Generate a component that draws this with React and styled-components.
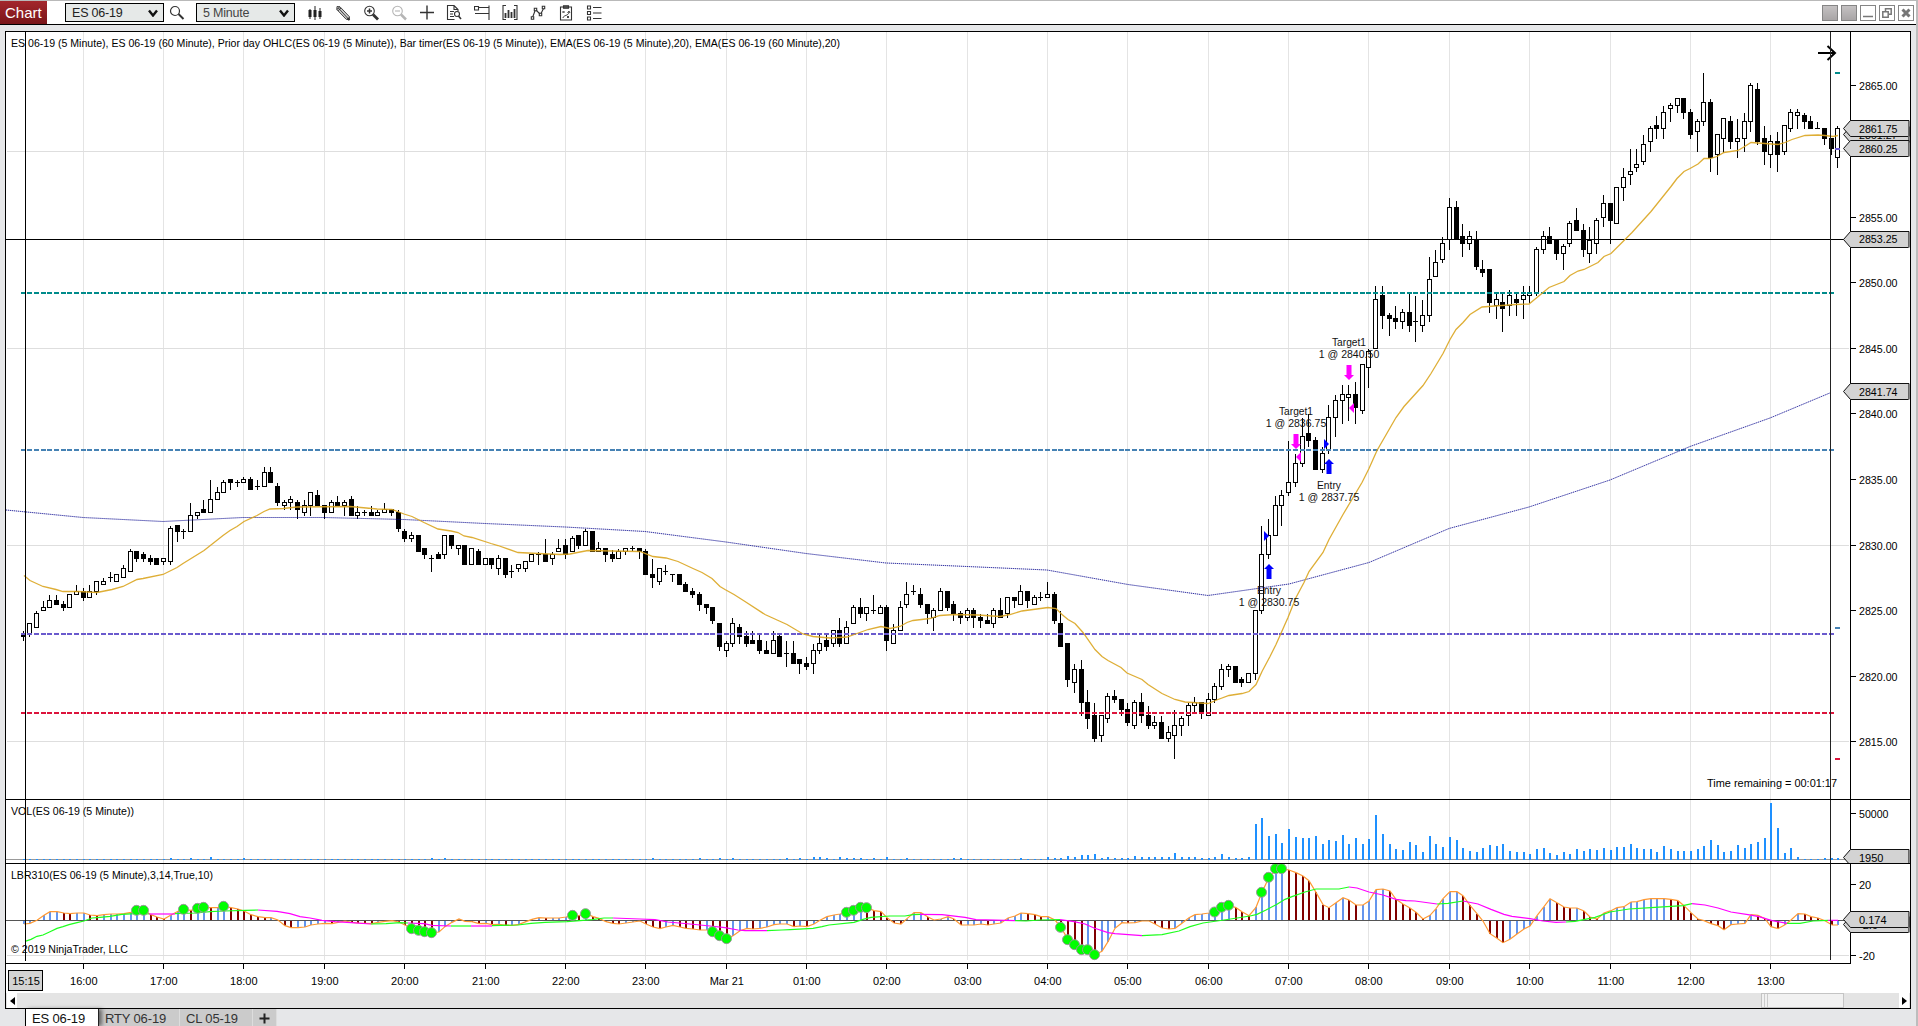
import React from "react";
import styled, { createGlobalStyle } from "styled-components";

const BAR_STEP = 6.6965;
const barX = (i) => Math.floor(23 + i * BAR_STEP);
const priceY = (price) => Math.round(85.4 + (2865 - price) * 13.12);
const lbrY = (v) => 790 + v / 3;

// high, body top, body bottom, low in pixels, then x = filled, o = hollow
const candles = `
631 635 637 641 x,623 623 634 637 o,611 613 628 628 o,601 607 611 611 o,595 600 608 608 o,595 600 605 605 x,
601 604 608 611 x,594 594 608 608 o,585 591 595 595 o,588 591 598 601 x,585 591 598 598 o,581 581 592 595 o,
578 581 585 585 o,572 577 578 582 x,574 574 582 582 o,565 568 578 578 o,549 551 572 572 o,551 551 559 562 x,
552 554 559 562 x,555 558 562 565 x,558 558 565 565 x,558 558 562 565 o,526 528 562 565 o,525 525 532 542 x,
529 531 532 539 x,503 515 532 532 o,512 512 516 519 o,500 509 513 513 x,480 499 513 513 o,487 492 500 500 o,
480 482 493 493 o,479 479 483 490 x,480 482 483 487 x,477 479 483 483 o,477 479 490 490 x,480 486 487 490 x,
467 472 487 487 o,467 472 483 483 x,483 486 503 506 x,500 502 506 510 o,496 499 503 510 o,500 502 510 519 x,
500 505 513 516 o,492 492 506 516 o,490 495 506 506 x,505 505 513 519 x,500 502 513 513 o,496 502 506 506 x,
500 502 506 516 o,496 499 516 516 x,506 512 516 519 o,510 512 513 516 x,506 512 516 516 x,510 512 516 516 o,
503 509 513 513 o,509 509 513 516 x,510 512 529 532 x,529 531 539 542 x,532 535 539 542 o,535 535 552 552 x,
548 548 555 559 x,555 558 559 572 x,552 554 559 559 x,535 535 555 559 o,535 535 546 549 x,545 545 549 555 o,
545 545 565 565 x,548 548 565 565 o,549 551 565 565 x,558 558 565 565 o,558 558 565 569 x,555 558 569 575 o,
558 558 575 578 x,565 571 572 578 x,564 564 569 572 o,561 561 569 572 o,554 554 562 562 o,552 554 555 565 x,
539 554 562 562 x,552 554 559 565 o,539 548 552 552 o,539 545 555 559 x,536 538 552 552 o,535 535 546 549 x,
529 531 546 546 o,531 531 552 552 x,542 548 552 552 o,548 548 555 562 x,550 554 559 562 x,549 551 559 559 o,
548 548 552 555 o,546 548 549 551 x,548 548 552 559 x,549 551 575 575 x,559 574 578 588 x,568 568 582 585 o,
565 571 572 575 x,574 574 575 582 x,574 574 585 585 x,582 584 592 592 x,588 591 595 598 x,592 594 605 611 x,
604 604 608 614 x,607 607 621 624 x,623 623 647 651 x,641 643 651 657 o,618 623 644 647 o,624 627 637 644 x,
631 636 644 647 x,631 640 644 644 x,634 640 651 654 x,641 650 654 654 x,631 640 654 654 o,634 636 657 657 x,
641 653 654 667 x,641 653 664 664 x,659 659 664 674 x,657 663 667 670 x,644 650 664 674 o,635 643 651 654 o,
635 640 647 651 x,630 630 644 647 o,618 630 644 647 x,621 627 644 644 o,605 607 624 624 o,598 607 614 618 x,
607 607 614 621 o,595 610 611 614 x,605 607 614 614 o,605 607 641 651 x,624 630 644 644 o,601 607 631 631 o,
582 594 605 608 o,585 591 592 595 x,588 594 605 608 x,604 604 614 624 x,608 610 618 631 o,588 591 611 611 o,
591 591 608 611 x,601 604 614 621 x,611 613 618 624 x,608 610 618 621 o,608 610 618 628 x,614 617 621 628 x,
614 620 624 624 x,608 610 624 628 o,598 610 618 618 x,597 597 614 618 o,597 597 601 608 x,585 591 605 605 o,
591 591 601 608 x,595 597 605 605 o,592 597 598 601 x,582 594 598 598 o,592 594 621 624 x,611 623 647 647 x,
643 643 680 687 x,664 669 683 693 o,660 669 703 716 x,690 702 719 729 x,703 715 739 742 x,715 715 736 742 o,
693 696 719 723 o,690 696 700 703 x,699 699 710 716 x,703 709 723 726 x,700 702 726 729 o,693 702 716 723 x,
706 715 726 729 x,716 722 726 729 o,716 722 739 739 x,726 732 739 742 o,710 725 736 759 o,716 718 726 736 o,
703 705 716 726 o,697 702 706 712 o,702 702 714 719 x,693 699 716 716 o,683 686 700 703 o,664 669 687 690 o,
664 666 670 677 o,666 666 683 683 x,677 679 683 687 x,673 673 683 683 o,610 610 674 680 o,526 554 611 614 o,
519 535 555 559 o,496 505 536 536 o,490 495 506 526 o,441 482 493 496 o,454 463 483 487 o,418 436 464 467 o,
414 433 441 447 x,437 440 470 470 x,447 453 470 473 o,405 417 450 454 o,395 400 418 437 o,385 394 401 424 o,
385 394 398 421 o,382 394 408 424 x,364 364 411 414 o,349 351 368 388 o,286 299 349 349 o,286 295 316 329 x,
313 315 319 336 x,306 318 322 329 x,309 312 322 329 o,293 312 326 332 x,296 321 322 342 x,300 315 326 332 o,
257 279 316 322 o,250 262 277 277 o,237 243 260 263 o,198 207 240 250 o,201 207 240 240 x,224 236 244 257 x,
231 236 244 250 o,231 240 267 270 x,260 269 273 277 x,269 269 303 313 x,293 299 306 319 o,293 302 309 332 x,
290 295 306 316 o,294 299 303 316 x,286 295 300 319 o,286 293 296 303 o,247 249 294 296 o,231 236 250 254 o,
227 236 244 244 x,240 240 254 260 x,244 246 254 270 o,221 223 244 247 o,208 220 231 231 x,224 230 250 257 x,
227 240 254 263 o,218 220 244 254 o,195 203 218 227 o,203 203 221 244 x,187 187 224 224 o,168 177 188 201 o,
149 171 175 185 o,149 164 168 172 o,135 144 162 165 o,126 128 142 152 o,116 125 129 139 x,106 112 129 139 o,
103 105 109 122 o,98 98 106 113 o,98 98 113 119 x,109 112 135 139 x,119 121 132 152 o,73 102 122 126 o,
99 102 158 172 x,134 134 155 175 o,118 118 139 153 o,116 121 142 149 x,119 138 142 158 o,113 121 139 152 o,
83 85 122 132 o,83 89 142 145 x,126 138 152 165 x,135 141 155 168 o,132 141 155 172 x,125 125 152 155 o,
109 112 129 132 o,109 112 116 129 o,113 115 122 129 x,116 121 129 129 x,122 128 129 129 x,128 128 139 145 x,
138 138 149 155 x,126 128 158 168 o`
  .trim()
  .split(",")
  .map((row) => {
    const [high, top, bottom, low, kind] = row.trim().split(" ");
    return { high: +high, top: +top, bottom: +bottom, low: +low, filled: kind === "x" };
  });

const ema5 =
  "24,575 30,580 43,586 56,589 63,591 78,591 97,592 112,589 123,586 137,579 143,578 163,574 177,567 183,563 204,550 223,535 230,530 237,526 244,521 257,515 264,511 270,508.5 283,508 297,506.5 350,506 377,508.5 392,509 404,513.5 412,516 424,522 438,528.5 451,530.5 458,532 464,535.5 472,537 491,543 498,545 518,552 538,553 560,554 570,553.5 580,551.5 588,550 612,550.5 640,551 653,556 666,557.5 678,561 693,568 702,572 712,578 720,586 725,589 734,594 745,601 765,614 787,624 803,633.5 813,636 830,637.5 847,636.5 857,633 868,629 881,626 890,628 900,626 907,622 913,620 930,618 940,615 955,614 978,614.5 1000,616 1010,614 1022,610.5 1048,607 1056,608 1062,614 1068,619 1075,623 1083,632 1095,649 1102,656 1108,660 1121,667 1127,672.5 1142,679 1148,684 1162,693 1175,699 1185,701.5 1200,702.5 1208,703 1218,699 1229,695 1242,693 1249,691 1256,684 1262,671 1270,656 1276,644 1288,617 1296,597 1304,582 1309,571 1323,552 1329,539 1343,514 1362,482 1369,468 1377,450 1396,417 1404,406 1423,385 1431,373 1443,353 1450,339 1456,329 1463,322 1470,314 1482,306.5 1495,305.5 1515,304 1529,303.5 1537,297 1549,287 1564,281 1570,275 1578,270.5 1584,269 1598,262 1604,256 1611,253 1621,243 1632,232 1651,211 1671,186 1677,178 1684,171 1690,168 1698,163.5 1704,158 1710,158 1717,156 1724,152 1738,150 1743,147 1751,142 1765,143 1778,144 1785,142 1792,139 1805,135 1818,134.5 1825,135 1833,136 1838,135";
const ema60 =
  "6,509.5 83,517 163,521 243,517 324,517 404,519 485,523 565,526.5 645,531 726,541.5 806,553 886,562.5 967,566 1047,569.5 1128,584 1208,595 1289,583.5 1369,562 1449,528 1529,506.5 1610,479.5 1690,446 1770,417.5 1831,392";

const levels = [
  { y: 292, last: 72, color: "#008b8b" },
  { y: 449, last: 627, color: "#4682b4" },
  { y: 633, last: 148, color: "#6a5acd" },
  { y: 712, last: 758, color: "#dc143c" },
];

// overnight bars taller than one pixel
const smallVolume = {
  22: 2, 25: 2, 28: 3, 33: 2, 61: 2, 63: 2, 94: 2, 101: 2, 104: 2, 106: 2, 114: 2, 116: 2, 118: 3, 119: 3,
  120: 2, 122: 3, 123: 2, 124: 2, 125: 2, 127: 2, 129: 3, 132: 2, 139: 2, 140: 2, 149: 2, 153: 3, 154: 2,
  155: 2, 156: 4, 157: 3, 158: 5, 159: 5, 160: 6, 161: 2, 162: 3, 163: 2, 164: 2, 165: 2, 166: 4, 167: 3,
  168: 3, 169: 3, 170: 3, 171: 3, 172: 7, 173: 3, 174: 3, 175: 3, 176: 2, 177: 2, 178: 3, 179: 6, 180: 3,
  181: 2, 182: 2, 183: 3,
};
const dayVolume = [
  36, 42, 24, 26, 17, 31, 23, 22, 22, 24, 16, 20, 19, 25, 16, 22, 16, 21, 45, 26, 16, 11, 10, 18, 15, 8, 24,
  16, 13, 23, 20, 12, 9, 8, 12, 15, 14, 16, 9, 8, 8, 6, 11, 12, 7, 5, 8, 6, 11, 9, 11, 10, 12, 10, 13, 13, 16,
  12, 11, 11, 8, 14, 11, 9, 9, 9, 11, 14, 20, 15, 8, 9, 15, 12, 16, 18, 22, 57, 32, 7, 12, 3, 1, 1, 1, 2, 2, 2,
];
const volume = candles.map((_, i) => (i < 184 ? smallVolume[i] || 1 : dayVolume[i - 184] || 1));

const lbr = [
  402, 400, 391, 376, 365, 365, 369, 371, 369, 369, 375, 377, 374, 372, 372, 371, 367, 361, 361, 374, 381, 387,
  375, 364, 358, 361, 355, 352, 353, 353, 349, 353, 357, 363, 374, 380, 383, 383, 390, 407, 413, 413, 411, 405,
  402, 400, 401, 397, 393, 397, 399, 400, 401, 397, 394, 392, 396, 405, 416, 421, 425, 428, 426, 410, 397, 387,
  394, 395, 401, 400, 404, 403, 406, 406, 403, 395, 388, 383, 384, 384, 384, 381, 376, 377, 371, 380, 385, 395,
  400, 402, 399, 396, 393, 402, 411, 416, 411, 406, 411, 415, 417, 420, 420, 425, 437, 446, 437, 422, 415, 417,
  415, 411, 404, 402, 402, 410, 408, 410, 402, 391, 380, 375, 372, 367, 361, 352, 353, 362, 365, 383, 399, 402,
  386, 368, 368, 381, 390, 387, 380, 387, 405, 405, 405, 402, 405, 402, 399, 384, 378, 369, 371, 374, 380, 380,
  390, 412, 449, 464, 479, 479, 494, 484, 455, 415, 398, 399, 398, 393, 393, 402, 414, 417, 415, 400, 383, 374,
  372, 369, 366, 352, 346, 353, 365, 377, 352, 307, 262, 236, 236, 240, 248, 258, 272, 307, 344, 353, 338, 323,
  330, 345, 345, 333, 299, 297, 303, 328, 342, 354, 367, 387, 376, 356, 326, 305, 305, 317, 346, 371, 393, 431,
  445, 458, 448, 432, 417, 408, 377, 350, 326, 338, 351, 354, 354, 363, 381, 387, 369, 362, 353, 350, 336, 335,
  329, 326, 326, 326, 328, 332, 347, 368, 387, 392, 401, 407, 419, 404, 402, 400, 374, 376, 386, 410, 416, 404,
  390, 371, 372, 380, 384, 392, 405, 405,
];
const lbrDots = [
  17, 18, 24, 26, 27, 30, 58, 59, 60, 61, 82, 84, 103, 104, 105, 123, 124, 125, 126, 155, 156, 157, 158, 159,
  160, 178, 179, 180, 185, 186, 187, 188,
];
const slowLine = [
  ["up", [25,454, 31,448, 37,439, 43,435, 50,425, 57,415, 63,410, 69,404, 77,398, 84,393, 92,384, 100,382, 110,379, 122,373, 139,370, 149,372]],
  ["down", [149,372, 175,372]],
  ["up", [175,371, 196,369, 210,365, 224,363, 245,361, 258,360]],
  ["down", [258,360, 277,364, 290,371, 300,380, 310,384, 322,391, 335,395, 351,398, 371,402]],
  ["up", [371,402, 386,401, 400,398, 408,399]],
  ["down", [408,399, 424,401, 432,406, 451,408]],
  ["up", [451,408, 471,408]],
  ["down", [471,408, 492,408]],
  ["up", [492,407, 518,405, 531,400, 545,397, 567,395, 580,392, 592,389, 604,384, 613,384]],
  ["down", [613,384, 640,387, 655,389, 668,396, 690,402, 710,408, 725,413, 738,420, 745,422, 767,422]],
  ["up", [767,422, 782,420, 790,419, 813,415, 822,410, 829,405, 854,397, 863,388, 871,382, 890,378, 905,378, 913,374, 920,373]],
  ["down", [920,373, 942,374, 965,382, 976,389, 1015,392]],
  ["up", [1015,392, 1026,393, 1040,390, 1060,389]],
  ["down", [1060,389, 1074,395, 1085,402, 1094,414, 1108,428, 1115,431, 1142,437]],
  ["up", [1142,437, 1162,434, 1179,423, 1190,410, 1203,399, 1224,390, 1250,378, 1257,373, 1266,360, 1277,343, 1285,328, 1292,320, 1305,306, 1316,297, 1339,297, 1349,291]],
  ["down", [1349,291, 1357,294, 1369,306, 1383,315, 1396,328, 1406,332, 1415,333, 1437,342]],
  ["up", [1437,342, 1448,340, 1463,333]],
  ["down", [1463,333, 1478,342, 1491,358, 1504,373, 1512,379, 1530,386, 1543,393, 1556,397, 1566,396]],
  ["up", [1566,396, 1575,394, 1595,382, 1610,366, 1629,357, 1651,353, 1683,347, 1692,341]],
  ["down", [1692,341, 1705,345, 1718,354, 1731,366, 1748,374, 1759,380, 1772,392, 1787,400]],
  ["up", [1787,400, 1800,400, 1813,393, 1828,391]],
  ["down", [1828,391, 1838,391]],
];
const toPoints = (list) => {
  const out = [];
  for (let i = 0; i < list.length; i += 2) out.push(`${list[i]},${lbrY(list[i + 1])}`);
  return out.join(" ");
};

const hours = [
  "16:00", "17:00", "18:00", "19:00", "20:00", "21:00", "22:00", "23:00", "Mar 21", "01:00", "02:00", "03:00",
  "04:00", "05:00", "06:00", "07:00", "08:00", "09:00", "10:00", "11:00", "12:00", "13:00",
].map((label, n) => ({ label, x: barX(9 + n * 12) }));

const trades = [
  { side: "sell", x: 1349, name: "Target1", text: "1 @ 2840.50", textY: 346, arrowY: 365, markY: 408 },
  { side: "sell", x: 1296, name: "Target1", text: "1 @ 2836.75", textY: 415, arrowY: 434, markY: 457 },
  { side: "buy", x: 1329, name: "Entry", text: "1 @ 2837.75", textY: 489, arrowY: 459, markY: 444 },
  { side: "buy", x: 1269, name: "Entry", text: "1 @ 2830.75", textY: 594, arrowY: 564, markY: 536 },
];

const Panel = ({ top, height, children }) => (
  <Plot viewBox={`6 ${top} 1904 ${height}`} height={height}>
    <g shapeRendering="crispEdges">
      {hours.map((h) => (
        <rect key={h.label} x={h.x} y={top} width="1" height={Math.min(height, 960 - top)} fill="#e4e4e4" />
      ))}
    </g>
    {children}
  </Plot>
);

const Cursor = ({ top, height }) => (
  <g shapeRendering="crispEdges">
    <rect x="25" y={top} width="1" height={Math.min(height, 961 - top)} fill="#000" />
    <rect x="1830" y={top} width="1" height={Math.min(height, 960 - top)} fill="#222" />
    <rect x="1850" y={top} width="1" height={height} fill="#000" />
  </g>
);

const PriceText = ({ y, children }) => (
  <text x="1859" y={y} textLength="38.5" lengthAdjust="spacingAndGlyphs">{children}</text>
);

const Tag = ({ y, baseline = 13, wide, children }) => (
  <g>
    <path d={`M1843.5 ${y + 8.5}L1850.5 ${y + 0.5}H1909V${y + 16.5}H1850.5Z`} fill="#d3d3d3" stroke="#111" />
    <rect x="1908" y={y + 1} width="1" height="16" fill="#666" />
    {wide ? <PriceText y={y + baseline}>{children}</PriceText> : <text x="1859" y={y + baseline}>{children}</text>}
  </g>
);

const PricePanel = () => (
  <Panel top={32} height={767}>
    <g shapeRendering="crispEdges">
      {[2860, 2845, 2830, 2815].map((p) => (
        <rect key={p} x="7" y={priceY(p)} width="1842" height="1" fill="#dedede" />
      ))}
      {candles.map((c, i) => (
        <g key={i}>
          <rect x={barX(i)} y={c.high} width="1" height={c.low - c.high} />
          <rect x={barX(i) - 2} y={c.top} width="5" height={c.bottom - c.top} />
          {!c.filled && <rect x={barX(i) - 1} y={c.top + 1} width="3" height={c.bottom - c.top - 2} fill="#fff" />}
        </g>
      ))}
      <rect x="6" y="239" width="1838" height="1" />
      {levels.map((l) =>
        candles.map((_, i) => (
          <rect key={l.y + "-" + i} x={barX(i) - 2} y={i === 271 ? l.last : l.y} width="5" height="2" fill={l.color} />
        ))
      )}
    </g>
    <polyline points={ema60} fill="none" stroke="#00008b" strokeWidth="1" opacity="0.22" transform="translate(0 .5)" />
    <polyline
      points={ema60}
      fill="none"
      stroke="#00008b"
      strokeWidth="1"
      strokeDasharray="1 1"
      opacity="0.75"
      transform="translate(0 .5)"
    />
    <polyline points={ema5} fill="none" stroke="#daa520" strokeWidth="1.3" opacity="0.9" transform="translate(0 .5)" />
    {trades.map((t) => {
      const sell = t.side === "sell";
      const dir = sell ? 1 : -1;
      const tip = sell ? t.arrowY + 15 : t.arrowY;
      const tail = sell ? t.arrowY : t.arrowY + 15;
      const base = t.x + (sell ? 5 : -5);
      return (
        <g key={t.text} fill={sell ? "#f0f" : "#00f"}>
          <path
            d={`M${t.x - 2.5} ${tail}h5V${tip - dir * 5}h2.5L${t.x} ${tip}L${t.x - 5} ${tip - dir * 5}h2.5Z`}
          />
          <path d={`M${t.x} ${t.markY}L${base} ${t.markY - 5}V${t.markY + 5}Z`} />
          <g fill="#111" textAnchor="middle">
            <text x={t.x} y={t.textY} textLength={sell ? 34 : 24} lengthAdjust="spacingAndGlyphs">{t.name}</text>
            <text x={t.x} y={t.textY + 12} textLength="60.5" lengthAdjust="spacingAndGlyphs">{t.text}</text>
          </g>
        </g>
      );
    })}
    <text x="11" y="47" textLength="829" lengthAdjust="spacingAndGlyphs">
      ES 06-19 (5 Minute), ES 06-19 (60 Minute), Prior day OHLC(ES 06-19 (5 Minute)), Bar timer(ES 06-19 (5 Minute)), EMA(ES 06-19 (5 Minute),20), EMA(ES 06-19 (60 Minute),20)
    </text>
    <text x="1707" y="787" textLength="130" lengthAdjust="spacingAndGlyphs">Time remaining = 00:01:17</text>
    <path d="M1818 53H1835M1827.5 46L1835 53L1827.5 60" fill="none" stroke="#000" strokeWidth="2" />
    <Cursor top={32} height={767} />
    {[2865, 2855, 2850, 2845, 2840, 2835, 2830, 2825, 2820, 2815].map((p) => (
      <g key={p}>
        <rect x="1851" y={priceY(p)} width="5" height="1" />
        <PriceText y={priceY(p) + 5}>{p}.00</PriceText>
      </g>
    ))}
    <Tag wide y={126}>2861.27</Tag>
    <Tag wide y={140}>2860.25</Tag>
    <Tag wide y={120}>2861.75</Tag>
    <Tag wide y={231} baseline={12}>2853.25</Tag>
    <Tag wide y={383}>2841.74</Tag>
  </Panel>
);

const VolumePanel = () => (
  <Panel top={800} height={63}>
    <g shapeRendering="crispEdges">
      <rect x="6" y="859" width="1840" height="1" fill="#999" />
      {volume.map((v, i) => (
        <rect key={i} x={barX(i)} y={860 - v} width="2" height={v} fill="#1e90ff" />
      ))}
      <rect x="1851" y="813" width="5" height="1" />
    </g>
    <text x="11" y="815" textLength="123" lengthAdjust="spacingAndGlyphs">VOL(ES 06-19 (5 Minute))</text>
    <Cursor top={800} height={63} />
    <text x="1859" y="818" textLength="29.5" lengthAdjust="spacingAndGlyphs">50000</text>
    <Tag y={849}>1950</Tag>
  </Panel>
);

const LbrPanel = () => (
  <Panel top={864} height={100}>
    <g shapeRendering="crispEdges">
      <rect x="7" y="955" width="1842" height="1" fill="#dedede" />
      {lbr.map((v, i) => {
        const y = Math.round(lbrY(v));
        const rising = i === 0 || v <= lbr[i - 1];
        return (
          <rect
            key={i}
            x={barX(i)}
            y={Math.min(y, 920)}
            width="2"
            height={Math.abs(920 - y)}
            fill={rising ? "#6495ed" : "#800000"}
          />
        );
      })}
      <rect x="6" y="920" width="1840" height="1" fill="#555" />
    </g>
    <polyline
      points={lbr.map((v, i) => `${barX(i) + 1},${lbrY(v)}`).join(" ")}
      fill="none"
      stroke="#ff9933"
      strokeWidth="1.2"
    />
    {slowLine.map(([dir, list], i) => (
      <polyline key={i} points={toPoints(list)} fill="none" stroke={dir === "up" ? "#1eff1e" : "#f0f"} strokeWidth="1.2" />
    ))}
    {lbrDots.map((i) => (
      <circle key={i} cx={barX(i) + 0.5} cy={lbrY(lbr[i])} r="5" fill="#0f0" stroke="#999" />
    ))}
    <text x="11" y="879" textLength="202" lengthAdjust="spacingAndGlyphs">LBR310(ES 06-19 (5 Minute),3,14,True,10)</text>
    <text x="11" y="953" textLength="117" lengthAdjust="spacingAndGlyphs">© 2019 NinjaTrader, LLC</text>
    <Cursor top={864} height={100} />
    <g shapeRendering="crispEdges">
      <rect x="6" y="963" width="1845" height="1" />
      <rect x="1851" y="884" width="5" height="1" />
      <rect x="1851" y="955" width="5" height="1" />
    </g>
    <text x="1859" y="889">20</text>
    <text x="1859" y="960">-20</text>
    <Tag y={916}>-2.6</Tag>
    <Tag y={911}>0.174</Tag>
  </Panel>
);

const TimeAxis = () => (
  <Plot viewBox="6 964 1904 29" height="29">
    {hours.map((h) => (
      <g key={h.label}>
        <rect x={h.x} y="964" width="1" height="5" />
        <text x={h.x + 0.8} y="985" textAnchor="middle">{h.label}</text>
      </g>
    ))}
    <rect x="8.5" y="970.5" width="34" height="20" fill="#d3d3d3" stroke="#000" />
    <text x="26" y="985" textAnchor="middle">15:15</text>
  </Plot>
);

const toolIcons = [
  // candlesticks
  <g fill="#222" stroke="none">
    <path d="M1.500 5h3v7h-3zM6.500 5h3v7h-3zM11.500 6h3v6h-3z" />
    <path d="M2.500 4h1v10h-1zM7.500 1h1v14h-1zM12.500 3h1v11h-1z" />
  </g>,
  // pencil
  <g strokeWidth=".9">
    <path d="M2 1.500l3 .3 9.500 10-.3 3-3-.5L1.800 4.500z" fill="#ccc" />
    <path d="M3.400 3l9.500 10.500M1.800 4.500l3-2.700M3 5.800l3-2.700" />
    <path d="M12.500 13l2 2" strokeWidth="1.800" />
  </g>,
  <g>
    <circle cx="6.500" cy="6" r="4.800" />
    <path d="M6.500 3.500v5M4 6h5" strokeWidth="1.500" />
    <path d="M10 9.500l5 5" strokeWidth="2.800" />
  </g>,
  <g stroke="#b5b5b5">
    <circle cx="6.500" cy="6" r="4.800" />
    <path d="M4 6h5" />
    <path d="M10 9.500l5 5" strokeWidth="2.500" />
  </g>,
  <path d="M8 .5v14M1 7.500h14" strokeWidth="1.400" />,
  // data box
  <g>
    <path d="M8.500 14.500h-7v-14h6.500l4 4v2M8 .5v4h4M4 6.500h4M4 9h3M4 11.500h4" />
    <circle cx="11" cy="9" r="2.500" fill="#fff" />
    <path d="M12.500 11l2.500 3" strokeWidth="1.600" />
  </g>,
  // chart trader
  <path d="M15 .5v14.500M.5 1.500h4v3.500h-4zM4.500 2.500h10.500M1 8.500h14" />,
  // data series
  <g>
    <path d="M4 .5h-3v14h3M12 .5h3v14h-3" />
    <path d="M3.500 8v5M6.500 5v8M9.500 7v6M12.500 4v9" strokeWidth="1.800" />
  </g>,
  // indicators
  <g>
    <path d="M2.500 12.500l3-8 5 5 3.500-7" />
    <path d="M1.300 11.800h2.400v2.400h-2.400zM4.300 3.300h2.400v2.400h-2.400zM9.300 8.300h2.400v2.400h-2.400zM12.300 1.300h2.400v2.400h-2.400z" fill="#fff" />
  </g>,
  // strategies
  <g>
    <path d="M2.500 2h11v13h-11z" />
    <path d="M5.500 .8h5v2.500h-5z" fill="#555" />
    <path d="M4.500 6l2 2m0-2l-2 2M9 11l2 2m0-2l-2 2M5 13c0-3 6-2 6-6M9.500 8l1.500-2L12 8" strokeWidth=".9" />
  </g>,
  // properties
  <path d="M1.500 1h3v3h-3zM1.500 6.500h3v3h-3zM1.500 12h3v3h-3zM7 2.500h8.500M7 8h8.500M7 13.500h8.500" />,
];

const App = () => (
  <Window>
    <GlobalStyle />
    <Toolbar>
      <ChartButton>Chart</ChartButton>
      <Select>
        ES 06-19
        <Chevron viewBox="0 0 10 8"><path d="M1 1.500L5 6.500L9 1.500" /></Chevron>
      </Select>
      <SearchIcon viewBox="0 0 16 16">
        <circle cx="6" cy="6" r="4.500" />
        <path d="M9.500 9l5 5" strokeWidth="2" />
      </SearchIcon>
      <Select $muted>
        5 Minute
        <Chevron viewBox="0 0 10 8"><path d="M1 1.500L5 6.500L9 1.500" /></Chevron>
      </Select>
      <Tools>
        {toolIcons.map((icon, i) => (
          <ToolIcon key={i} viewBox="0 0 16 16">{icon}</ToolIcon>
        ))}
      </Tools>
      <Controls>
        <Control $filled />
        <Control $filled />
        <Control><svg viewBox="0 0 14 14"><path d="M2 10.500h10" /></svg></Control>
        <Control><svg viewBox="0 0 14 14"><path d="M5.500 5V2.800h5.700v5.400H9M2.800 5.800h5.400v5.400H2.800z" /></svg></Control>
        <Control><svg viewBox="0 0 14 14"><path d="M3.500 3.500l7 7M10.500 3.500l-7 7" strokeWidth="3" /></svg></Control>
      </Controls>
    </Toolbar>
    <Frame>
      <PricePanel />
      <Divider />
      <VolumePanel />
      <Divider />
      <LbrPanel />
      <TimeAxis />
      <ScrollBar>
        <ScrollButton><svg width="5" height="8"><path d="M5 0L0 4L5 8Z" /></svg></ScrollButton>
        <Thumb />
        <ScrollButton><svg width="5" height="8"><path d="M0 0L5 4L0 8Z" /></svg></ScrollButton>
      </ScrollBar>
    </Frame>
    <Tabs>
      <Tab $active $width={74}>ES 06-19</Tab>
      <Tab $width={81}>RTY 06-19</Tab>
      <Tab $width={73}>CL 05-19</Tab>
      <Tab $width={24}>
        <svg width="11" height="11"><path d="M5.500 .5v10M.5 5.500h10" stroke="#222" strokeWidth="2" /></svg>
      </Tab>
    </Tabs>
  </Window>
);

export default App;

const GlobalStyle = createGlobalStyle`
  * {
    box-sizing: border-box;
  }
  body {
    margin: 0;
    overflow: hidden;
    background: #e6e7e9;
    font-family: "Liberation Sans", Arial, sans-serif;
  }
`;

const Window = styled.div`
  width: 1918px;
  height: 1026px;
  overflow: hidden;
  background: #e6e7e9;
  border-top: 1px solid #b9b9b9;
  border-right: 2px solid #bdbdbd;
`;

const Toolbar = styled.div`
  display: flex;
  align-items: center;
  height: 24px;
  padding-right: 2px;
  background: #fff;
  border-bottom: 1px solid #000;
`;

const ChartButton = styled.div`
  width: 47px;
  height: 23px;
  padding-left: 5px;
  line-height: 23px;
  font-size: 15px;
  color: #fff;
  background: linear-gradient(#a3262c, #7a1519);
`;

const Select = styled.div`
  display: flex;
  align-items: center;
  justify-content: space-between;
  width: 99px;
  height: 19px;
  margin-left: ${(props) => (props.$muted ? 11 : 18)}px;
  padding: 0 5px 0 6px;
  font-size: 12.5px;
  letter-spacing: -0.2px;
  color: ${(props) => (props.$muted ? "#444" : "#222")};
  background: #e6e9e8;
  border: 1px solid #000;
`;

const Chevron = styled.svg`
  width: 10px;
  height: 8px;
  fill: none;
  stroke: #111;
  stroke-width: 2.4;
`;

const SearchIcon = styled.svg`
  width: 16px;
  height: 16px;
  margin-left: 5px;
  fill: none;
  stroke: #333;
  stroke-width: 1.2;
`;

const Tools = styled.div`
  display: flex;
  gap: 11.9px;
  margin-left: 12px;
`;

const ToolIcon = styled.svg`
  width: 16px;
  height: 16px;
  fill: none;
  stroke: #333;
  stroke-width: 1.1;
`;

const Controls = styled.div`
  display: flex;
  gap: 3px;
  margin-left: auto;
`;

const Control = styled.div`
  width: 16px;
  height: 16px;
  border: 1px solid #858585;
  background: ${(props) => (props.$filled ? "linear-gradient(#c4c1c2, #a8a5a6)" : "#fff")};

  svg {
    display: block;
    fill: none;
    stroke: #777;
    stroke-width: 1.5;
  }
`;

const Frame = styled.div`
  width: 1906px;
  height: 978px;
  margin: 6px 0 0 5px;
  background: #fff;
  border: 1px solid #000;
`;

const Plot = styled.svg`
  display: block;
  width: 1904px;
  overflow: hidden;
  font-size: 11px;
`;

const Divider = styled.div`
  height: 1px;
  background: #000;
`;

const ScrollBar = styled.div`
  display: flex;
  height: 15px;
  padding: 0 1px;
  background: #e4e4e4;
`;

const ScrollButton = styled.div`
  display: flex;
  align-items: center;
  justify-content: center;
  width: 10px;
  background: #fff;
`;

const Thumb = styled.div`
  width: 83px;
  margin: 0 55px 0 auto;
  border: 1px solid #c4c4c4;
  background: linear-gradient(90deg, transparent 2px, #ccc 2px 3px, transparent 3px 5px, #ccc 5px 6px, transparent 6px)
    #f1f1f1;
`;

const Tabs = styled.div`
  display: flex;
  height: 17px;
  padding-left: 25px;
`;

const Tab = styled.div`
  display: flex;
  align-items: center;
  justify-content: ${(props) => (props.$width < 30 ? "center" : "flex-start")};
  width: ${(props) => props.$width}px;
  padding: ${(props) => (props.$width < 30 ? "1px 0 0" : "2px 0 0 6px")};
  font-size: 13px;
  letter-spacing: -0.15px;
  white-space: nowrap;
  color: ${(props) => (props.$active ? "#111" : "#333")};
  background: ${(props) => (props.$active ? "#fff" : "#cbcbcb")};
  border-left: ${(props) => (props.$active ? "1px solid #000" : "0")};
  border-right: 1px solid ${(props) => (props.$active ? "#222" : "#ddd")};
  box-shadow: ${(props) => (props.$active ? "3px 0 4px rgba(0, 0, 0, 0.5)" : "none")};
  z-index: ${(props) => (props.$active ? 1 : 0)};
`;
